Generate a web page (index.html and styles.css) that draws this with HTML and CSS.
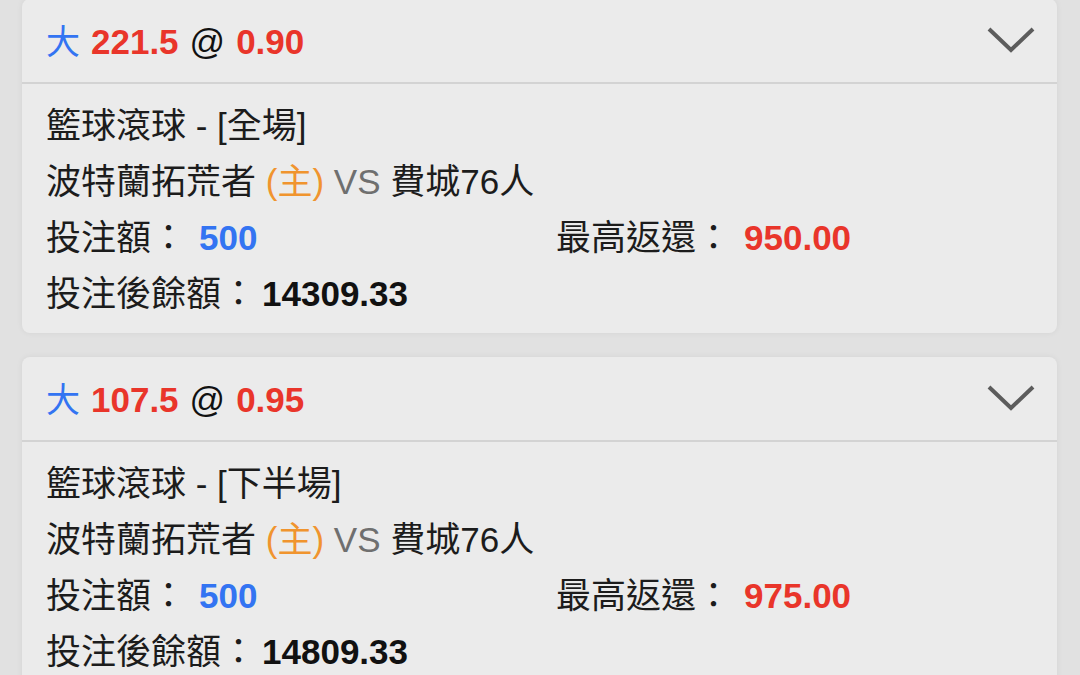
FILE: index.html
```html
<!DOCTYPE html>
<html lang="zh-Hant">
<head>
    <meta charset="UTF-8">
    <title>投注記錄</title>
    <link rel="stylesheet" href="styles.css">
</head>
<body>

    <div class="bet-list">
        <div class="bet-card first">
            <div class="bet-head">
                <div class="bet-title">
                    <span class="side">大</span>
                    <span class="num">221.5</span>
                    <span class="at">@</span>
                    <span class="num">0.90</span>
                </div>
                <svg class="chevron" width="48" height="28" viewBox="0 0 48 28">
                    <path d="M2 3 L24 24 L46 3" fill="none" stroke="#5c5c5c" stroke-width="4"/>
                </svg>
            </div>
            <div class="bet-body">
                <div class="row">籃球滾球 - [全場]</div>
                <div class="row">波特蘭拓荒者 <span class="home">(主)</span> <span class="vs">VS</span> 費城76人</div>
                <div class="row cols">
                    <div>投注額：<span class="stake">500</span></div>
                    <div>最高返還：<span class="payout">950.00</span></div>
                </div>
                <div class="row">投注後餘額：<span class="balance">14309.33</span></div>
            </div>
        </div>

        <div class="bet-card">
            <div class="bet-head">
                <div class="bet-title">
                    <span class="side">大</span>
                    <span class="num">107.5</span>
                    <span class="at">@</span>
                    <span class="num">0.95</span>
                </div>
                <svg class="chevron" width="48" height="28" viewBox="0 0 48 28">
                    <path d="M2 3 L24 24 L46 3" fill="none" stroke="#5c5c5c" stroke-width="4"/>
                </svg>
            </div>
            <div class="bet-body">
                <div class="row">籃球滾球 - [下半場]</div>
                <div class="row">波特蘭拓荒者 <span class="home">(主)</span> <span class="vs">VS</span> 費城76人</div>
                <div class="row cols">
                    <div>投注額：<span class="stake">500</span></div>
                    <div>最高返還：<span class="payout">975.00</span></div>
                </div>
                <div class="row">投注後餘額：<span class="balance">14809.33</span></div>
            </div>
        </div>
    </div>

</body>
</html>
```

FILE: styles.css
```css
body {
    margin: 0;
    background-color: #e1e1e1;
    font-family: "Liberation Sans", "Noto Sans CJK TC", sans-serif;
    color: #1c1c1c;
    overflow: hidden;
}
.bet-list {
    padding: 0 23px 0 22px;
    display: flex;
    flex-direction: column;
    gap: 24px;
}
.bet-card {
    background-color: #ebebeb;
    border-radius: 8px;
    box-shadow: 0 0 6px rgba(0,0,0,0.06);
}
.bet-card.first {
    margin-top: -1px;
}
.bet-head {
    height: 83px;
    display: flex;
    align-items: center;
    justify-content: space-between;
    padding: 0 22px 0 24px;
    border-bottom: 2px solid #d3d3d3;
}
.bet-title {
    font-size: 35px;
    line-height: 40px;
    font-weight: bold;
    display: flex;
    align-items: baseline;
    gap: 11px;
    padding-top: 2px;
}
.bet-title .side {
    color: #3374f2;
    font-weight: normal;
    font-size: 34px;
}
.bet-title .num {
    color: #e9352a;
}
.bet-title .at {
    color: #111;
    font-weight: normal;
}
.chevron {
    margin-top: -2px;
}
.bet-body {
    padding: 14px 24px 11px;
    font-size: 35px;
}
.row {
    line-height: 56px;
    white-space: nowrap;
}
.cols {
    display: grid;
    grid-template-columns: 510px 1fr;
}
.home {
    color: #f0942e;
}
.vs {
    color: #6f6f6f;
}
.stake {
    color: #3374f2;
    font-weight: bold;
    margin-left: 13px;
}
.payout {
    color: #e9352a;
    font-weight: bold;
    margin-left: 13px;
}
.balance {
    font-weight: bold;
    color: #111;
    margin-left: 6px;
}
```
